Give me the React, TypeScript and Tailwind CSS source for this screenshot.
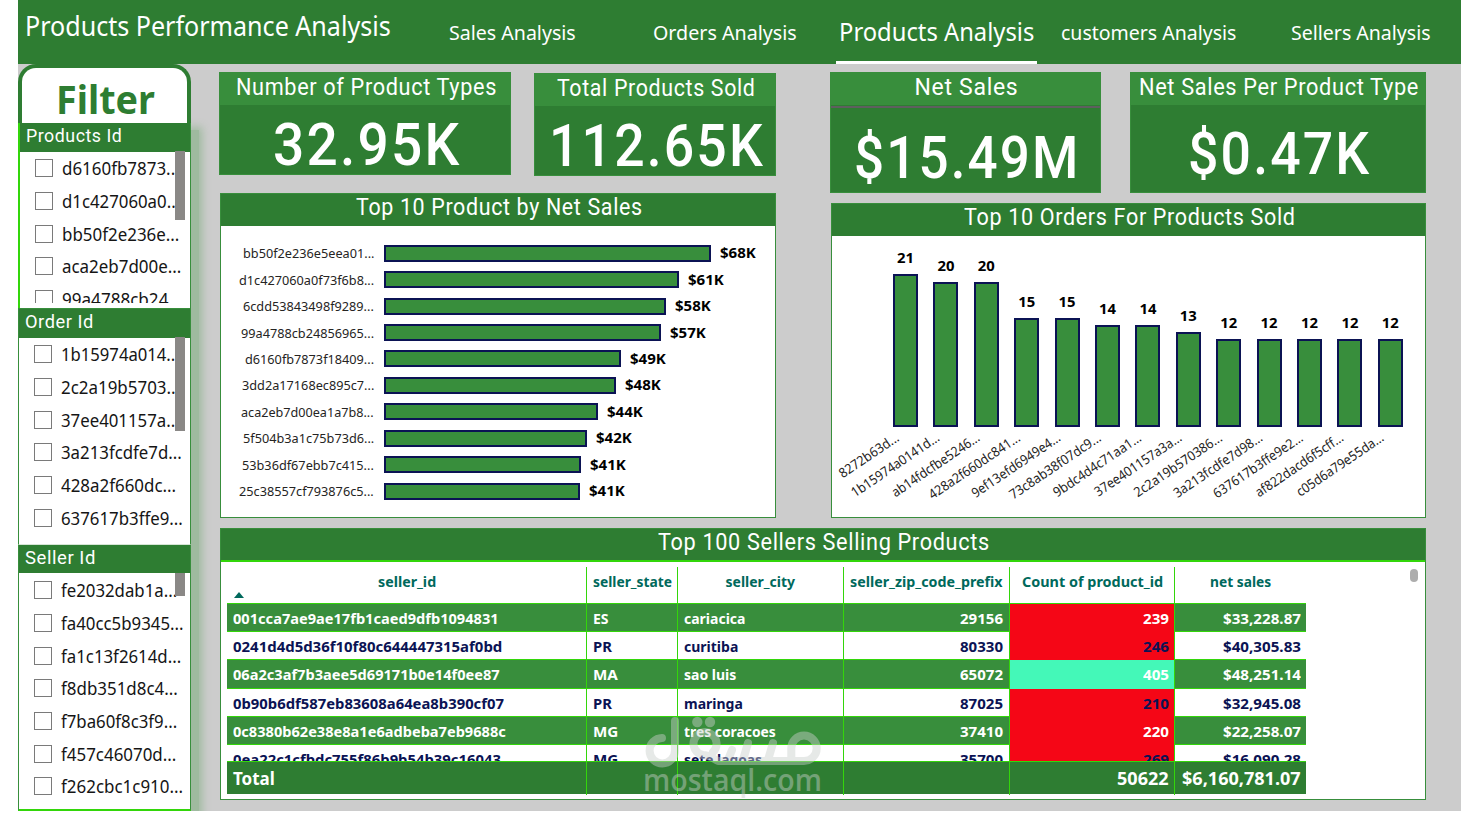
import { useLayoutEffect, useRef, useState } from 'react'
import type { ReactNode } from 'react'

interface Item {
  text: string
  w: number
}

interface SellerRow {
  id: string
  idW: number
  state: string
  stateW: number
  city: string
  cityW: number
  zip: string
  count: string
  sales: string
  high?: boolean
}

const tabs = [
  { text: 'Sales Analysis', w: 127 },
  { text: 'Orders Analysis', w: 144 },
  { text: 'Products Analysis', w: 195, active: true },
  { text: 'customers Analysis', w: 175 },
  { text: 'Sellers Analysis', w: 140 },
]

const productIds: Item[] = [
  { text: 'd6160fb7873...', w: 118 },
  { text: 'd1c427060a0...', w: 118 },
  { text: 'bb50f2e236e...', w: 117 },
  { text: 'aca2eb7d00e...', w: 119 },
  { text: '99a4788cb24...', w: 120 },
]

const orderIds: Item[] = [
  { text: '1b15974a014...', w: 119 },
  { text: '2c2a19b5703...', w: 119 },
  { text: '37ee401157a...', w: 119 },
  { text: '3a213fcdfe7d...', w: 121 },
  { text: '428a2f660dc...', w: 115 },
  { text: '637617b3ffe9...', w: 122 },
]

const sellerIds: Item[] = [
  { text: 'fe2032dab1a...', w: 116 },
  { text: 'fa40cc5b9345...', w: 123 },
  { text: 'fa1c13f2614d...', w: 120 },
  { text: 'f8db351d8c4...', w: 117 },
  { text: 'f7ba60f8c3f9...', w: 116 },
  { text: 'f457c46070d...', w: 115 },
  { text: 'f262cbc1c910...', w: 122 },
]

const netSales = [
  { id: 'bb50f2e236e5eea01...', w: 131, bar: 327, value: '$68K' },
  { id: 'd1c427060a0f73f6b8...', w: 135, bar: 295, value: '$61K' },
  { id: '6cdd53843498f9289...', w: 131, bar: 282, value: '$58K' },
  { id: '99a4788cb24856965...', w: 133, bar: 277, value: '$57K' },
  { id: 'd6160fb7873f18409...', w: 129, bar: 237, value: '$49K' },
  { id: '3dd2a17168ec895c7...', w: 132, bar: 232, value: '$48K' },
  { id: 'aca2eb7d00ea1a7b8...', w: 133, bar: 214, value: '$44K' },
  { id: '5f504b3a1c75b73d6...', w: 131, bar: 203, value: '$42K' },
  { id: '53b36df67ebb7c415...', w: 132, bar: 197, value: '$41K' },
  { id: '25c38557cf793876c5...', w: 135, bar: 196, value: '$41K' },
]

const orders = [
  { id: '8272b63d...', len: 69, value: 21, h: 153 },
  { id: '1b15974a0141d...', len: 103, value: 20, h: 145 },
  { id: 'ab14fdcfbe5246...', len: 103, value: 20, h: 145 },
  { id: '428a2f660dc841...', len: 107, value: 15, h: 109 },
  { id: '9ef13efd6949e4...', len: 104, value: 15, h: 109 },
  { id: '73c8ab38f07dc9...', len: 107, value: 14, h: 102 },
  { id: '9bdc4d4c71aa1...', len: 103, value: 14, h: 102 },
  { id: '37ee401157a3a...', len: 102, value: 13, h: 95 },
  { id: '2c2a19b570386...', len: 103, value: 12, h: 88 },
  { id: '3a213fcdfe7d98...', len: 104, value: 12, h: 88 },
  { id: '637617b3ffe9e2...', len: 105, value: 12, h: 88 },
  { id: 'af822dacd6f5cff...', len: 103, value: 12, h: 88 },
  { id: 'c05d6a79e55da...', len: 102, value: 12, h: 88 },
]

const sellers: SellerRow[] = [
  { id: '001cca7ae9ae17fb1caed9dfb1094831', idW: 266, state: 'ES', stateW: 16, city: 'cariacica', cityW: 61, zip: '29156', count: '239', sales: '$33,228.87' },
  { id: '0241d4d5d36f10f80c644447315af0bd', idW: 269, state: 'PR', stateW: 19, city: 'curitiba', cityW: 54, zip: '80330', count: '246', sales: '$40,305.83' },
  { id: '06a2c3af7b3aee5d69171b0e14f0ee87', idW: 267, state: 'MA', stateW: 25, city: 'sao luis', cityW: 52, zip: '65072', count: '405', sales: '$48,251.14', high: true },
  { id: '0b90b6df587eb83608a64ea8b390cf07', idW: 271, state: 'PR', stateW: 19, city: 'maringa', cityW: 59, zip: '87025', count: '210', sales: '$32,945.08' },
  { id: '0c8380b62e38e8a1e6adbeba7eb9688c', idW: 273, state: 'MG', stateW: 25, city: 'tres coracoes', cityW: 92, zip: '37410', count: '220', sales: '$22,258.07' },
  { id: '0ea22c1cfbdc755f86b9b54b39c16043', idW: 268, state: 'MG', stateW: 25, city: 'sete lagoas', cityW: 78, zip: '35700', count: '269', sales: '$16,090.28' },
]

const tableCols = 'grid grid-cols-[360px_91px_166px_166px_165px_131px]'

// Squeezes or stretches a line of text to an exact width
function Fit({ w, children }: { w: number; children: ReactNode }) {
  const ref = useRef<HTMLSpanElement>(null)
  const [scale, setScale] = useState(1)

  useLayoutEffect(() => {
    if (ref.current) setScale(w / ref.current.offsetWidth)
  }, [w])

  return (
    <span className="inline-block shrink-0 whitespace-nowrap text-left" style={{ width: w }}>
      <span ref={ref} className="inline-block origin-left" style={{ transform: `scaleX(${scale})` }}>
        {children}
      </span>
    </span>
  )
}

function FilterList({ items }: { items: Item[] }) {
  return (
    <>
      {items.map((item) => (
        <div key={item.text} className="flex h-[32.7px] items-center gap-[9px] text-[17.5px] leading-[24px] text-[#151515]">
          <span className="h-[18px] w-[18px] shrink-0 border border-[#7a7a7a] bg-white" />
          <Fit w={item.w}>{item.text}</Fit>
        </div>
      ))}
    </>
  )
}

function FilterTitle({ title, w }: { title: string; w: number }) {
  return (
    <div className="h-full bg-[#2e7d32] pl-[6px] pt-px font-['Roboto',sans-serif] text-[18.5px] leading-[25px] tracking-[0.03em] text-white">
      <Fit w={w}>{title}</Fit>
    </div>
  )
}

function Kpi({ title, titleW, value, valueW, className, bodyClass, ruled }: {
  title: string
  titleW: number
  value: string
  valueW: number
  className: string
  bodyClass: string
  ruled?: boolean
}) {
  return (
    <div className={`border border-[#388e3c] bg-[#2e7d32] text-center font-['Roboto',sans-serif] text-white ${className}`}>
      <div className="h-[32px] bg-[#388e3c] pl-[2px] text-[23px] leading-[29px] tracking-[0.03em]">
        <Fit w={titleW}>{title}</Fit>
      </div>
      {ruled && <div className="mt-px h-[2px] bg-[#5f5f5f]" />}
      <div className={`pl-[3px] text-[60px] font-medium leading-[60px] tracking-[0.04em] ${bodyClass}`}>
        <Fit w={valueW}>{value}</Fit>
      </div>
    </div>
  )
}

function PanelTitle({ w, children }: { w: number; children: string }) {
  return (
    <div className="h-[32px] bg-[#2e7d32] pl-[2px] text-center font-['Roboto',sans-serif] text-[23px] leading-[28px] tracking-[0.03em] text-white">
      <Fit w={w}>{children}</Fit>
    </div>
  )
}

function Sidebar() {
  return (
    <aside className="h-[747px] w-[173px] shrink-0">
      <div className="h-[59px] rounded-t-[18px] border-x-4 border-t-4 border-[#2e7d32] bg-white pl-[2px] text-center text-[40px] font-bold leading-[62px] text-[#2e7d32]">
        <Fit w={99}>Filter</Fit>
      </div>

      <div className="relative h-[185px] border-l-2 border-r border-l-[#33d60a] border-r-[#388e3c] bg-white">
        <div className="h-[29px]">
          <FilterTitle title="Products Id" w={96} />
        </div>
        <div className="h-[151px] overflow-hidden pl-[15px]">
          <FilterList items={productIds} />
        </div>
        <div className="absolute right-[5px] top-[28px] h-[69px] w-[10px] bg-[#8a8886]" />
      </div>

      <div className="relative h-[236px] border-x border-t border-[#388e3c] bg-white">
        <div className="h-[29px]">
          <FilterTitle title="Order Id" w={69} />
        </div>
        <div className="h-[200px] overflow-hidden pl-[15px]">
          <FilterList items={orderIds} />
        </div>
        <div className="absolute right-[5px] top-[28px] h-[94px] w-[10px] bg-[#8a8886]" />
      </div>

      <div className="relative h-[267px] border-x border-b-2 border-t border-x-[#388e3c] border-b-[#33d60a] border-t-[#d5e5d5] bg-white">
        <div className="h-[28px]">
          <FilterTitle title="Seller Id" w={71} />
        </div>
        <div className="h-[230px] overflow-hidden pl-[15px] pt-px">
          <FilterList items={sellerIds} />
        </div>
        <div className="absolute right-[5px] top-[28px] h-[23px] w-[10px] bg-[#8a8886]" />
      </div>
    </aside>
  )
}

function NetSalesChart() {
  return (
    <div className="mt-[18px] h-[325px] w-[556px] border border-[#388e3c] bg-white">
      <PanelTitle w={287}>Top 10 Product by Net Sales</PanelTitle>
      <div className="pt-[14px]">
        {netSales.map((row) => (
          <div key={row.id} className="flex h-[26.45px] items-center text-[13px] leading-[18px] text-[#252423]">
            <div className="mr-[10px] flex w-[153px] justify-end">
              <Fit w={row.w}>{row.id}</Fit>
            </div>
            <div className="h-[17px] border-2 border-[#0b1354] bg-[#388e3c]" style={{ width: row.bar }} />
            <div className="ml-[9px] text-[14px] font-bold text-black">
              <Fit w={35.5}>{row.value}</Fit>
            </div>
          </div>
        ))}
      </div>
    </div>
  )
}

function OrdersChart() {
  return (
    <div className="mt-[10px] h-[315px] w-[595px] border border-[#388e3c] bg-white">
      <PanelTitle w={332}>Top 10 Orders For Products Sold</PanelTitle>
      <svg width="593" height="281" viewBox="832 236 593 281" className="block font-['Noto_Sans',sans-serif]">
        {orders.map((o, i) => {
          const x = 893 + i * 40.4
          return (
            <g key={o.id}>
              <rect x={Math.round(x) + 1} y={428 - o.h} width="23" height={o.h - 2} fill="#388e3c" stroke="#0b1354" strokeWidth="2" />
              <text
                x={x + 12.5}
                y={416 - o.h}
                textAnchor="middle"
                fontSize="14"
                fontWeight="700"
                textLength="17"
                lengthAdjust="spacingAndGlyphs"
              >
                {o.value}
              </text>
              <text
                transform={`translate(${x + 7} 440) rotate(-34)`}
                textAnchor="end"
                fontSize="13.5"
                fill="#252423"
                textLength={o.len}
                lengthAdjust="spacingAndGlyphs"
              >
                {o.id}
              </text>
            </g>
          )
        })}
      </svg>
    </div>
  )
}

function SellersTable() {
  const line = 'border-r border-[#33d60a]'
  return (
    <div className="relative mt-[10px] h-[272px] w-[1206px] border border-[#388e3c] bg-white">
      <div className="h-[31px]">
        <PanelTitle w={332}>Top 100 Sellers Selling Products</PanelTitle>
      </div>
      <div className="relative h-[2px] bg-[#33d60a]" />

      <div className="ml-[6px] mt-[5px] w-[1079px] text-[14px] font-bold">
        <div className={`${tableCols} h-[36px] text-center leading-[29px] text-[#00695c]`}>
          <div className={`relative ${line}`}>
            <Fit w={58}>seller_id</Fit>
            <svg width="10" height="6" className="absolute bottom-[5px] left-[7px]">
              <path d="M0 6 5 0 10 6Z" fill="#00695c" />
            </svg>
          </div>
          <div className={line}><Fit w={79}>seller_state</Fit></div>
          <div className={line}><Fit w={70}>seller_city</Fit></div>
          <div className={line}><Fit w={153}>seller_zip_code_prefix</Fit></div>
          <div className={line}><Fit w={141}>Count of product_id</Fit></div>
          <div><Fit w={61}>net sales</Fit></div>
        </div>

        <div className="h-[158px] overflow-hidden">
          {sellers.map((row, i) => (
            <div
              key={row.id}
              className={`${tableCols} h-[28.2px] border-t border-[#33d60a] leading-[29px] ${i % 2 ? 'bg-white text-[#0b1354]' : 'bg-[#388e3c] text-white'}`}
            >
              <div className={`pl-[6px] ${line}`}><Fit w={row.idW}>{row.id}</Fit></div>
              <div className={`pl-[6px] ${line}`}><Fit w={row.stateW}>{row.state}</Fit></div>
              <div className={`pl-[6px] ${line}`}><Fit w={row.cityW}>{row.city}</Fit></div>
              <div className={`pr-[6px] text-right ${line}`}><Fit w={43}>{row.zip}</Fit></div>
              <div className={`pr-[5px] text-right ${line} ${row.high ? 'bg-[#44f8b8]' : 'bg-[#f50616]'}`}>
                <Fit w={26}>{row.count}</Fit>
              </div>
              <div className="pr-[5px] text-right"><Fit w={78}>{row.sales}</Fit></div>
            </div>
          ))}
        </div>

        <div className={`${tableCols} h-[33px] border-t border-[#33d60a] bg-[#2e7d32] text-[17px] leading-[33px] text-white`}>
          <div className={`pl-[6px] ${line}`}><Fit w={42}>Total</Fit></div>
          <div className={line} />
          <div className={line} />
          <div className={line} />
          <div className={`pr-[5px] text-right ${line}`}><Fit w={52}>50622</Fit></div>
          <div className="pr-[5px] text-right"><Fit w={119}>$6,160,781.07</Fit></div>
        </div>
      </div>

      <div className="absolute right-[7px] top-[40px] h-[13px] w-[8px] rounded-full bg-[#adadad]" />
      <Watermark />
    </div>
  )
}

function Watermark() {
  return (
    <svg width="190" height="90" viewBox="640 712 190 90" className="absolute left-[419px] top-[183px] opacity-45">
      <g fill="none" stroke="#cacfcc" strokeWidth="8" strokeLinecap="round" strokeLinejoin="round">
        <path d="M662 738a12.7 12.7 0 1 0 13 12.7V721" />
        <path d="M713 752a11.5 11.5 0 1 0-10 3c6 0 9 3 15 6H804a12.7 12.7 0 1 0-12.7-12.7V761" />
        <path d="M728 760l4-10M743 760l5-17M768 760l5-17" />
      </g>
      <circle cx="697.3" cy="722" r="5.2" fill="#cacfcc" />
      <circle cx="710" cy="722" r="5.2" fill="#cacfcc" />
      <text
        x="643"
        y="791"
        fontSize="30"
        fontWeight="600"
        fill="#cacfcc"
        textLength="179"
        lengthAdjust="spacingAndGlyphs"
        className="font-['Open_Sans',sans-serif]"
      >
        mostaql.com
      </text>
    </svg>
  )
}

export default function App() {
  return (
    <div className="h-[813px] w-[1466px] overflow-hidden bg-white font-['Noto_Sans',sans-serif]">
      <div className="ml-[18px] h-[811px] w-[1443px] overflow-hidden bg-[#cccccc]">
        <header className="flex h-[64px] bg-[#2e7d32] text-white">
          <div className="w-[388.5px] shrink-0 pl-[7px] text-[27px] leading-[51px]">
            <Fit w={366}>Products Performance Analysis</Fit>
          </div>
          <nav className="flex shrink-0">
            {tabs.map((tab) => (
              <div key={tab.text} className="flex w-[212px] shrink-0 justify-center">
                <div
                  className={
                    tab.active
                      ? 'w-[201px] border-b-3 border-white text-center text-[24.5px] leading-[64px]'
                      : 'text-[20.5px] leading-[65px]'
                  }
                >
                  <Fit w={tab.w}>{tab.text}</Fit>
                </div>
              </div>
            ))}
          </nav>
        </header>

        <div className="flex">
          <Sidebar />
          {/* soft green shadow cast by the slicers */}
          <div className="w-[28px] shrink-0 overflow-hidden pt-[66px]">
            <div className="h-[720px] w-[8px] bg-[#9fba9f] shadow-[0_0_9px_3px_#9fba9f]" />
          </div>

          <main className="w-[1207px] shrink-0">
            <div className="flex gap-[54px]">
              <section className="w-[557px]">
                <div className="flex items-start gap-[23px] pt-[8px]">
                  <Kpi title="Number of Product Types" titleW={261} value="32.95K" valueW={188} className="h-[103px] w-[292px]" bodyClass="pt-[10px]" />
                  <Kpi title="Total Products Sold" titleW={199} value="112.65K" valueW={216} className="mt-px h-[103px] w-[242px]" bodyClass="pt-[10px]" />
                </div>
                <div className="-mt-px pl-px">
                  <NetSalesChart />
                </div>
              </section>

              <section className="w-[596px]">
                <div className="flex justify-between pt-[8px]">
                  <Kpi title="Net Sales" titleW={104} value="$15.49M" valueW={226} className="h-[121px] w-[271px]" bodyClass="pt-[20px]" ruled />
                  <Kpi title="Net Sales Per Product Type" titleW={280} value="$0.47K" valueW={183} className="h-[121px] w-[296px]" bodyClass="pt-[19px]" />
                </div>
                <div className="pl-px">
                  <OrdersChart />
                </div>
              </section>
            </div>
            <div className="pl-px">
              <SellersTable />
            </div>
          </main>
        </div>
      </div>
    </div>
  )
}
